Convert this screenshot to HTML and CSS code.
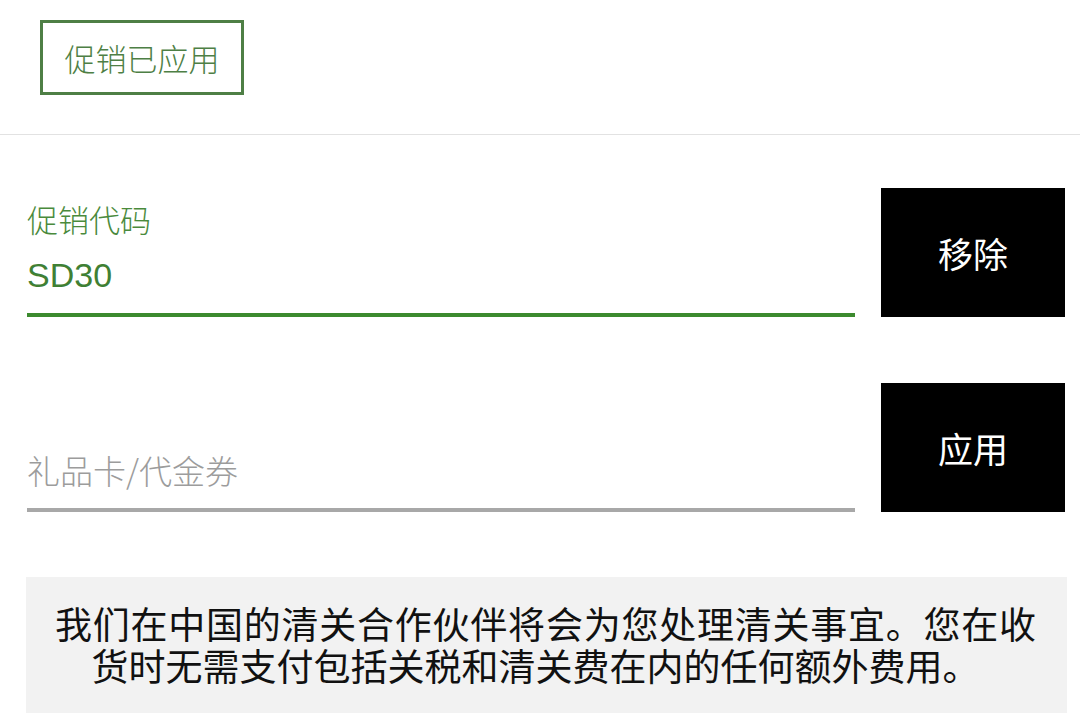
FILE: index.html
```html
<!DOCTYPE html>
<html lang="zh-CN">
<head>
<meta charset="utf-8">
<title>促销</title>
<link rel="stylesheet" href="styles.css">
</head>
<body>
<div class="page">
  <header class="top">
    <div class="badge">促销已应用</div>
  </header>

  <div class="row row-first">
    <div class="field field-active">
      <div class="field-label">促销代码</div>
      <div class="field-value">SD30</div>
    </div>
    <button class="btn" type="button">移除</button>
  </div>

  <div class="row row-second">
    <div class="field field-empty">
      <div class="field-placeholder">礼品卡/代金券</div>
    </div>
    <button class="btn" type="button">应用</button>
  </div>

  <div class="note">
    <span class="note-line note-line-full">我们在中国的清关合作伙伴将会为您处理清关事宜。您在收</span>
    <span class="note-line note-line-last">货时无需支付包括关税和清关费在内的任何额外费用。</span>
  </div>
</div>
</body>
</html>
```

FILE: styles.css
```css
* {
  box-sizing: border-box;
}

html, body {
  margin: 0;
  padding: 0;
  background: #ffffff;
}

body {
  font-family: "Noto Sans CJK SC", "Noto Sans", "Liberation Sans", sans-serif;
  font-weight: 300;
  width: 1080px;
  height: 727px;
  overflow: hidden;
}

.top {
  height: 135px;
  padding: 20px 0 0 40px;
  border-bottom: 1px solid #e2e2e2;
}

.badge {
  display: inline-flex;
  align-items: center;
  justify-content: center;
  width: 204px;
  height: 75px;
  border: 3px solid #4e7f45;
  color: #4e7f45;
  font-size: 31px;
  line-height: 1;
}

.row {
  display: flex;
  align-items: stretch;
  gap: 26px;
  padding: 0 15px 0 27px;
  height: 129px;
}

.row-first {
  margin-top: 53px;
}

.row-second {
  margin-top: 66px;
}

.field {
  flex: 1;
  display: flex;
  flex-direction: column;
  justify-content: flex-end;
  border-bottom: 4px solid #a8a8a8;
}

.field-active {
  border-bottom-color: #3c8a2e;
}

.field-label {
  color: #4a8a3c;
  font-size: 31px;
  line-height: 36px;
  margin-bottom: 18px;
}

.field-value {
  color: #3f8034;
  font-family: "Liberation Sans", "Noto Sans CJK SC", sans-serif;
  font-weight: 400;
  font-size: 34px;
  line-height: 40px;
  padding-bottom: 18px;
}

.field-placeholder {
  color: #9c9c9c;
  font-size: 33px;
  line-height: 40px;
  padding-bottom: 18px;
}

.btn {
  width: 184px;
  flex: none;
  border: none;
  background: #000000;
  color: #ffffff;
  font-family: inherit;
  font-weight: 400;
  font-size: 35px;
  line-height: 1;
  padding: 0;
  margin: 0;
  cursor: pointer;
}

.note {
  margin: 65px 13px 0 26px;
  height: 136px;
  background: #f2f2f2;
  padding: 25px 31px 27px 29px;
  color: #111111;
  font-weight: 400;
  font-size: 37px;
  line-height: 42px;
}

.note-line {
  display: block;
  white-space: nowrap;
}

.note-line-full {
  text-align: justify;
  text-align-last: justify;
  white-space: normal;
}

.note-line-last {
  text-align: center;
  padding-right: 20px;
}
```
